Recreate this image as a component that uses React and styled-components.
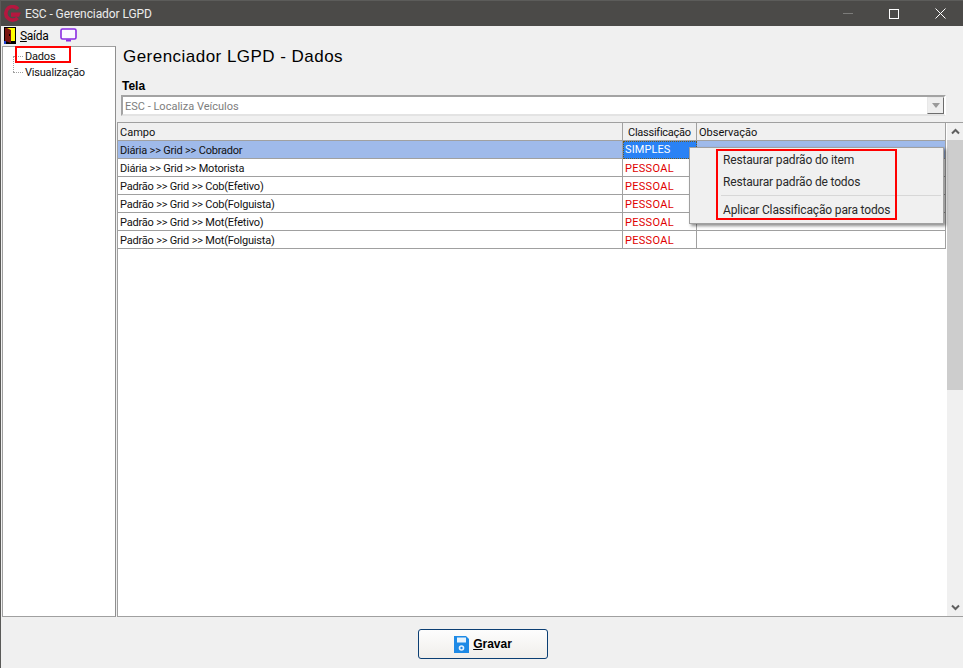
import React from "react";
import styled, { createGlobalStyle } from "styled-components";

const Global = createGlobalStyle`
  html, body { margin: 0; padding: 0; background: #f0f0f0; }
  * { box-sizing: border-box; }
`;
const Win = styled.div`
  width: 963px; height: 668px; overflow: hidden; display: flex; flex-direction: column;
  background: #f0f0f0; font-family: Roboto, "Liberation Sans", Arial, sans-serif; font-size: 11px; color: #000;
  position: relative; border-left: 1px solid #5a5a58;
`;
const TitleBar = styled.div`
  height: 26px; margin-left: -1px; flex: none; background: #4b4a48; border-top: 1px solid #5c5c5a; display: flex; align-items: center; color: #ececec; font-size: 12px; padding-left: 3px;
`;
const TitleText = styled.span`margin-left: 4px; flex: 1; letter-spacing: -.08px;`;
const WinBtn = styled.div`width: 46px; height: 25px; display: flex; align-items: center; justify-content: center;`;
const MenuBar = styled.div`
  height: 18px; flex: none; display: flex; align-items: center; padding-left: 3px; font-size: 12px;
`;
const MenuLabel = styled.span`margin: 1px 12px 0 4px; letter-spacing: -.3px; u { text-decoration: underline; }`;
const Body = styled.div`height: 573px; flex: none; display: flex; padding: 2px 0 0 1px;`;
const Tree = styled.div`
  width: 114px; height: 571px; margin-right: 1px; padding-top: 1px; flex: none; background: #fff; border: 1px solid #a0a0a0; border-right-color: #8f8f8f; position: relative;
`;
const TreeItem = styled.div`
  height: 16px; display: flex; align-items: center; padding-left: 22px; position: relative; color: #111; letter-spacing: -.2px;
  &::before { content: ""; position: absolute; left: 10px; top: 8px; width: 10px; border-top: 1px dotted #a0a0a0; }
  &::after { content: ""; position: absolute; left: 10px; top: ${p => p.$first ? 8 : -8}px; height: ${p => p.$first ? 8 : 16}px; border-left: 1px dotted #a0a0a0; }
`;
const Main = styled.div`flex: 1; min-width: 0; display: flex; flex-direction: column; position: relative;`;
const Heading = styled.h1`
  margin: 0; padding: 1px 0 0 6px; height: 31px; font-family: "Liberation Sans", Arial, sans-serif; font-size: 17px; line-height: 20px; font-weight: 400; letter-spacing: .47px; color: #000;
`;
const FieldLabel = styled.div`padding-left: 5px; margin-top: 2px; height: 16px; font-family: "Liberation Sans", Arial, sans-serif; font-weight: 700; font-size: 12px; line-height: 14px;`;
const Combo = styled.div`
  margin-left: 4px; width: 825px; height: 21px; flex: none; background: #fff; display: flex; align-items: center; justify-content: space-between;
  border: 2px solid; border-color: #a3a3a3 #fff #e3e3e3 #a3a3a3; color: #7d7d7d; padding-left: 2px;
`;
const ComboText = styled.span`padding-top: 1px;`;
const ComboBtn = styled.div`
  width: 17px; height: 17px; background: #eee; border: 1px solid; border-color: #e8e8e8 #6d6d6d #6d6d6d #e8e8e8; display: flex; align-items: center; justify-content: center;
  &::after { content: ""; border: 4px solid transparent; border-top: 5px solid #9a9a9a; border-bottom: 0; }
`;
const GridWrap = styled.div`
  margin-top: 6px; height: 495px; display: flex; border-top: 1px solid #a0a0a0; border-left: 1px solid #a0a0a0; border-bottom: 1px solid #a0a0a0; background: #fff;
`;
const Table = styled.div`flex: 1; min-width: 0; display: flex; flex-direction: column;`;
const Row = styled.div`
  height: 18px; flex: none; margin-right: 1px; display: grid; grid-template-columns: 505px 74px 1fr; background: ${p => p.$head ? "#f0f0f0" : p.$sel ? "#9fbaea" : "#fff"}; border-bottom: 1px solid #a0a0a0; border-right: 1px solid #a0a0a0;
`;
const Cell = styled.div`
  padding: 1px 0 0 2px; line-height: 17px; border-right: 1px solid #a0a0a0; white-space: nowrap; overflow: hidden; color: ${p => p.$c || "#111"}; letter-spacing: ${p => p.$c ? ".3px" : "-.2px"};
  &:last-child { border-right: 0; }
`;
const HeadCell = styled(Cell)`padding-left: ${p => p.$pl || 2}px; color: #111; letter-spacing: ${p => p.$ls || "0"};`;
const ActiveCell = styled.div`
  padding-left: 1px; line-height: 16px; height: 18px; background: #2a82f5; color: #fff; border: 1px dotted #6f5a20; letter-spacing: .1px;
`;
const Scroll = styled.div`width: 16px; flex: none; background: #f0f0f0; display: flex; flex-direction: column;`;
const ScrollBtn = styled.div`height: 17px; flex: none; display: flex; align-items: center; justify-content: center;`;
const Thumb = styled.div`height: 250px; background: #cdcdcd;`;
const Track = styled.div`flex: 1;`;
const Footer = styled.div`
  flex: 1; display: flex; align-items: flex-start; justify-content: center; padding-top: 12px;
`;
const SaveBtn = styled.div`
  width: 130px; height: 30px; border: 1px solid #0b3e73; border-radius: 3px; background: linear-gradient(#fdfdfd, #f0eeeb); display: flex; align-items: center; justify-content: center; gap: 4px; font-family: "Liberation Sans", Arial, sans-serif; font-size: 12px; font-weight: 700; color: #000;
  margin-left: 2px;
  u { text-decoration: underline; }
`;
const PopMenu = styled.div`
  position: absolute; left: 688px; top: 147px; width: 255px; height: 77px; background: #f0f0f0; border: 1px solid #a0a0a0; box-shadow: 2px 2px 3px rgba(0,0,0,.45); font-size: 12px; color: #2a2a2a;
  padding-top: 1px; z-index: 2;
`;
const PopItem = styled.div`height: 22px; line-height: 22px; padding-left: 33px; letter-spacing: -.16px;`;
const PopSep = styled.div`height: 1px; background: #d7d7d7; margin: 2px 2px 3px 31px;`;
const RedBox = styled.div`
  position: absolute; border: 2px solid #f00; pointer-events: none; z-index: 3;
  left: ${p => p.$l}px; top: ${p => p.$t}px; width: ${p => p.$w}px; height: ${p => p.$h}px;
`;

const Logo = () => (
  <svg width="18" height="18" viewBox="0 0 18 18">
    <path d="M15 4.2A6.8 6.8 0 1 0 14.6 13" fill="none" stroke="#b5173f" strokeWidth="3.6" />
    <path d="M8 7.4h10l-2 4.4H8z" fill="#b5173f" />
  </svg>
);
const DoorIcon = () => (
  <svg width="12" height="17" viewBox="0 0 12 17">
    <rect width="12" height="17" fill="#000" />
    <rect x="1" y="1" width="10" height="13" fill="#ffff00" />
    <path d="M1 1h2l4 2v13l-6-2z" fill="#7a1510" />
    <rect x="5" y="7" width="1" height="2" fill="#000" />
    <path d="M0 14h2v3H0z" fill="#1f3fd0" />
  </svg>
);
const ScreenIcon = () => (
  <svg width="17" height="14" viewBox="0 0 17 14">
    <rect x="1" y="1" width="15" height="10" rx="1.5" fill="#fbf8ff" stroke="#8a2be2" strokeWidth="1.6" />
    <path d="M6 12.5h5" stroke="#8a2be2" strokeWidth="2" />
  </svg>
);
const Floppy = () => (
  <svg width="15" height="17" viewBox="0 0 15 17">
    <path d="M0 0h12l3 3v14H0z" fill="#1e8ae6" />
    <rect x="3" y="1.5" width="9" height="5" fill="#e8f3fc" />
    <circle cx="7.5" cy="12" r="2.8" fill="#e8f3fc" />
    <circle cx="7.5" cy="12" r="1.2" fill="#1e8ae6" />
  </svg>
);
const Chevron = ({ up }) => (
  <svg width="9" height="7" viewBox="0 0 9 7">
    <path d={up ? "M1 5.5l3.5-3.5 3.5 3.5" : "M1 1.5l3.5 3.5 3.5-3.5"} fill="none" stroke="#606060" strokeWidth="2" />
  </svg>
);

const rows = [
  ["Diária >> Grid >> Cobrador", "SIMPLES"],
  ["Diária >> Grid >> Motorista", "PESSOAL"],
  ["Padrão >> Grid >> Cob(Efetivo)", "PESSOAL"],
  ["Padrão >> Grid >> Cob(Folguista)", "PESSOAL"],
  ["Padrão >> Grid >> Mot(Efetivo)", "PESSOAL"],
  ["Padrão >> Grid >> Mot(Folguista)", "PESSOAL"],
];

export default function App() {
  return (
    <Win>
      <Global />
      <TitleBar>
        <Logo />
        <TitleText>ESC - Gerenciador LGPD</TitleText>
        <WinBtn>
          <svg width="10" height="1"><rect width="10" height="1" fill="#7c7c7a" /></svg>
        </WinBtn>
        <WinBtn>
          <svg width="10" height="10"><rect x=".5" y=".5" width="9" height="9" fill="none" stroke="#fff" /></svg>
        </WinBtn>
        <WinBtn>
          <svg width="11" height="11"><path d="M.5.5l10 10M10.5.5l-10 10" stroke="#fff" /></svg>
        </WinBtn>
      </TitleBar>
      <MenuBar>
        <DoorIcon />
        <MenuLabel><u>S</u>aída</MenuLabel>
        <ScreenIcon />
      </MenuBar>
      <Body>
        <Tree>
          <TreeItem $first>Dados</TreeItem>
          <TreeItem>Visualização</TreeItem>
        </Tree>
        <Main>
          <Heading>Gerenciador LGPD - Dados</Heading>
          <FieldLabel>Tela</FieldLabel>
          <Combo>
            <ComboText>ESC - Localiza Veículos</ComboText>
            <ComboBtn />
          </Combo>
          <GridWrap>
            <Table>
              <Row $head>
                <HeadCell>Campo</HeadCell>
                <HeadCell $pl={5} $ls="-.25px">Classificação</HeadCell>
                <HeadCell>Observação</HeadCell>
              </Row>
              {rows.map(([campo, cls], i) => (
                <Row key={campo} $sel={i === 0}>
                  <Cell>{campo}</Cell>
                  {i === 0 ? <ActiveCell>{cls}</ActiveCell> : <Cell $c="#e00000">{cls}</Cell>}
                  <Cell />
                </Row>
              ))}
            </Table>
            <Scroll>
              <ScrollBtn><Chevron up /></ScrollBtn>
              <Thumb />
              <Track />
              <ScrollBtn><Chevron /></ScrollBtn>
            </Scroll>
          </GridWrap>
        </Main>
      </Body>
      <Footer>
        <SaveBtn><Floppy /><span><u>G</u>ravar</span></SaveBtn>
      </Footer>
      <PopMenu>
        <PopItem>Restaurar padrão do item</PopItem>
        <PopItem>Restaurar padrão de todos</PopItem>
        <PopSep />
        <PopItem>Aplicar Classificação para todos</PopItem>
      </PopMenu>
      <RedBox $l={14} $t={46} $w={56} $h={17} />
      <RedBox $l={715} $t={149} $w={181} $h={71} />
    </Win>
  );
}
